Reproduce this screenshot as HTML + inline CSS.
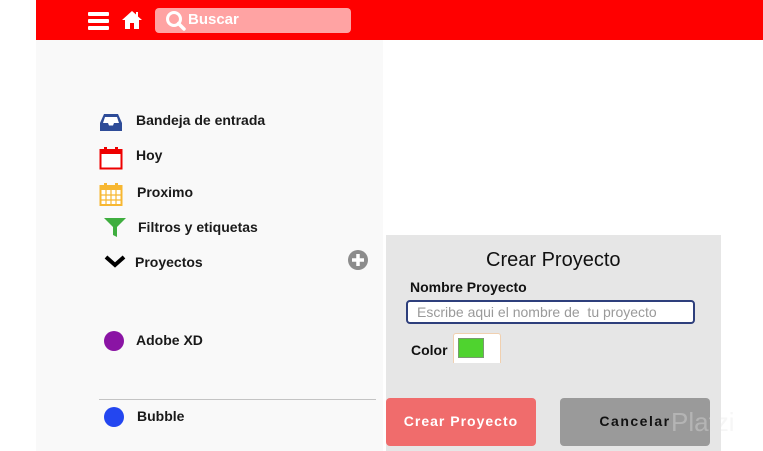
<!DOCTYPE html>
<html><head><meta charset="utf-8"><style>
*{margin:0;padding:0;box-sizing:border-box}
body{width:763px;height:451px;background:#fff;position:relative;overflow:hidden;font-family:"Liberation Sans",sans-serif;color:#111}
.hdr{position:absolute;left:36px;top:0;width:727px;height:40px;background:#ff0000}
.side{position:absolute;left:36px;top:40px;width:347px;height:411px;background:#f9f9f9}
.abs{position:absolute}
.it{position:absolute;font-size:14px;font-weight:bold;color:#1a1a1a}
.modal{position:absolute;left:386px;top:235px;width:335px;height:216px;background:#e6e6e6}
</style></head><body>
<div class="hdr"></div>
<div class="abs" style="left:88px;top:12px;width:21px;height:4px;background:#fff;border-radius:1px"></div>
<div class="abs" style="left:88px;top:19px;width:21px;height:4px;background:#fff;border-radius:1px"></div>
<div class="abs" style="left:88px;top:26px;width:21px;height:4px;background:#fff;border-radius:1px"></div>
<svg class="abs" style="left:121px;top:10px" width="22" height="20" viewBox="0 0 22 20"><path d="M11 1 L1 10 L4 10 L4 19 L9 19 L9 13 L13 13 L13 19 L18 19 L18 10 L21 10 L17 6.5 L17 2 L15 2 L15 4.5 Z" fill="#fff"/></svg>
<div class="abs" style="left:155px;top:8px;width:196px;height:25px;background:#ffa3a3;border-radius:4px"></div>
<svg class="abs" style="left:165px;top:10px" width="24" height="22" viewBox="0 0 24 22"><circle cx="9" cy="9" r="6.5" fill="none" stroke="#fff" stroke-width="3"/><path d="M13.5 13.5 L19 19" stroke="#fff" stroke-width="3.5" stroke-linecap="round"/></svg>
<div class="abs" style="left:188px;top:11px;font-size:15px;font-weight:bold;color:#fff">Buscar</div>
<div class="side"></div>
<svg class="abs" style="left:100px;top:113px" width="22" height="19" viewBox="0 0 22 19"><path d="M4 1 H18 L22 10 V18 H0 V10 Z" fill="#2e4c98"/><path d="M5 4 H17 L19 10 H14 L13 12.5 H9 L8 10 H3 Z" fill="#fff"/></svg>
<div class="it" style="left:136px;top:112px">Bandeja de entrada</div>
<svg class="abs" style="left:99px;top:146px" width="24" height="24" viewBox="0 0 24 24"><rect x="1.5" y="4" width="21" height="18.5" fill="#fff" stroke="#e00" stroke-width="2"/><rect x="1.5" y="4" width="21" height="4" fill="#e00"/><rect x="5" y="1" width="3" height="6" fill="#e00"/><rect x="16" y="1" width="3" height="6" fill="#e00"/></svg>
<div class="it" style="left:136px;top:147px">Hoy</div>
<svg class="abs" style="left:99px;top:182px" width="24" height="24" viewBox="0 0 24 24"><rect x="1.5" y="4" width="21" height="19" fill="#fff" stroke="#f7b731" stroke-width="2"/><rect x="1.5" y="4" width="21" height="4" fill="#f7b731"/><rect x="5" y="1" width="3" height="6" fill="#f7b731"/><rect x="16" y="1" width="3" height="6" fill="#f7b731"/><path d="M7 8V23M12 8V23M17 8V23M1.5 13H22.5M1.5 18H22.5" stroke="#f7b731" stroke-width="1.2"/></svg>
<div class="it" style="left:137px;top:184px">Proximo</div>
<svg class="abs" style="left:104px;top:218px" width="22" height="20" viewBox="0 0 22 20"><path d="M0 0 H22 L13 9 V19 L9 17 V9 Z" fill="#3fae3f"/></svg>
<div class="it" style="left:138px;top:219px">Filtros y etiquetas</div>
<svg class="abs" style="left:104px;top:254px" width="22" height="16" viewBox="0 0 22 16"><path d="M2 3 L11 11 L20 3" fill="none" stroke="#000" stroke-width="4"/></svg>
<div class="it" style="left:135px;top:254px">Proyectos</div>
<svg class="abs" style="left:347px;top:249px" width="22" height="22" viewBox="0 0 22 22"><circle cx="11" cy="11" r="10" fill="#8c8c8c"/><path d="M11 5V17M5 11H17" stroke="#fff" stroke-width="3.5"/></svg>
<div class="abs" style="left:104px;top:331px;width:20px;height:20px;border-radius:50%;background:#8a14a4"></div>
<div class="it" style="left:136px;top:332px">Adobe XD</div>
<div class="abs" style="left:99px;top:399px;width:277px;height:1px;background:#c4c4c4"></div>
<div class="abs" style="left:104px;top:407px;width:20px;height:20px;border-radius:50%;background:#2346f0"></div>
<div class="it" style="left:137px;top:408px">Bubble</div>
<div class="modal"></div>
<div class="abs" style="left:486px;top:249px;font-size:20px;color:#111">Crear Proyecto</div>
<div class="abs" style="left:410px;top:279px;font-size:14px;font-weight:bold;color:#111">Nombre Proyecto</div>
<div class="abs" style="left:406px;top:300px;width:289px;height:24px;background:#fff;border:2px solid #2e3f7c;border-radius:4px"></div>
<div class="abs" style="left:417px;top:304px;font-size:14px;color:#9a9a9a">Escribe aqui el nombre de &nbsp;tu proyecto</div>
<div class="abs" style="left:411px;top:342px;font-size:14px;font-weight:bold;color:#111">Color</div>
<div class="abs" style="left:453px;top:333px;width:48px;height:30px;background:#fff;border:1px solid #f0d0b0;border-bottom:none;border-radius:3px 3px 0 0"></div>
<div class="abs" style="left:458px;top:338px;width:26px;height:20px;background:#4fd32f;border:1px solid #7a9a70"></div>
<div class="abs" style="left:386px;top:398px;width:150px;height:48px;background:#f06c6c;border-radius:4px"></div>
<div class="abs" style="left:386px;top:413px;width:150px;text-align:center;font-size:14px;font-weight:bold;color:#fff;letter-spacing:1px">Crear Proyecto</div>
<div class="abs" style="left:560px;top:398px;width:150px;height:48px;background:#9a9a9a;border-radius:4px"></div>
<div class="abs" style="left:671px;top:407px;font-size:26px;color:rgba(230,230,230,0.35)">Platzi</div>
<div class="abs" style="left:560px;top:413px;width:150px;text-align:center;font-size:14px;font-weight:bold;color:#111;letter-spacing:1.5px">Cancelar</div>
</body></html>
